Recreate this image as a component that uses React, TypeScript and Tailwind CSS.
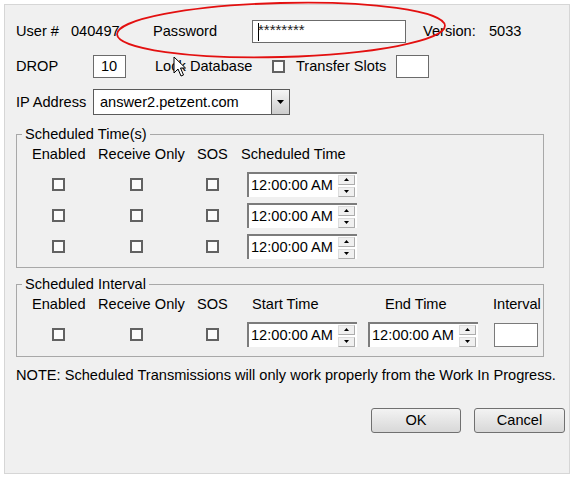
import React from "react";

const font = { fontFamily: '"Liberation Sans", Arial, sans-serif' };

function Check() {
  return <div className="w-[13px] h-[13px] border-2 border-[#626262] bg-[#fcfcfc]" />;
}

function Spinner() {
  return (
    <div className="flex flex-col gap-[2px] mr-[2px]">
      <div className="w-[17px] h-[10px] border border-[#acacac] border-t-[#dcdcdc] border-l-[#dcdcdc] bg-[#f0f0f0] flex items-center justify-center">
        <svg width="5" height="3" viewBox="0 0 5 3">
          <path d="M0 3 L2.5 0 L5 3 Z" fill="#000" />
        </svg>
      </div>
      <div className="w-[17px] h-[10px] border border-[#acacac] border-t-[#dcdcdc] border-l-[#dcdcdc] bg-[#f0f0f0] flex items-center justify-center">
        <svg width="5" height="3" viewBox="0 0 5 3">
          <path d="M0 0 L5 0 L2.5 3 Z" fill="#000" />
        </svg>
      </div>
    </div>
  );
}

function TimeBox() {
  return (
    <div className="w-[110px] h-[25px] bg-white border-t-2 border-l-2 border-[#7c7c7c] flex items-center justify-between">
      <span className="pl-[2px] leading-none">12:00:00 AM</span>
      <Spinner />
    </div>
  );
}

function Cell({ w, children }: { w: string; children?: React.ReactNode }) {
  return <div className={w + " shrink-0 whitespace-nowrap"}>{children}</div>;
}

export default function App() {
  return (
    <div className="relative w-[576px] h-[478px] bg-white pt-[4px] pl-[4px] text-black text-[14.6px] leading-[17px]" style={font}>
      <div className="w-[566px] h-[470px] border border-[#d6d6d6] bg-[#f0f0f0] pl-[11px]">
        {/* row 1 */}
        <div className="flex items-center h-[23px] mt-[15px]">
          <span className="w-[55px]">User #</span>
          <span className="w-[82px]">040497</span>
          <span className="w-[99px]">Password</span>
          <div className="w-[154px] h-[23px] bg-white border border-[#6b6b6b] flex items-center pl-[5px]">
            <div className="w-px h-[18px] bg-black" />
            <span className="text-[15px] leading-none -ml-px mb-[4px] text-[#1e1e1e]">********</span>
          </div>
          <span className="w-[66px] ml-[17px]">Version:</span>
          <span>5033</span>
        </div>

        {/* row 2 */}
        <div className="flex items-center h-[23px] mt-[12px]">
          <span className="w-[77px]">DROP</span>
          <div className="w-[33px] h-[23px] bg-white border border-[#6b6b6b] flex items-center pl-[7px]">10</div>
          <span className="w-[117px] ml-[29px]">Lock Database</span>
          <Check />
          <span className="w-[100px] ml-[11px]">Transfer Slots</span>
          <div className="w-[33px] h-[23px] bg-white border border-[#6b6b6b]" />
        </div>

        {/* row 3 */}
        <div className="flex items-center h-[26px] mt-[11px]">
          <span className="w-[77px]">IP Address</span>
          <div className="w-[197px] h-[26px] bg-white border border-[#5a5a5a] flex">
            <span className="flex-1 pl-[6px] flex items-center">answer2.petzent.com</span>
            <div className="w-[18px] h-full border-l border-[#5a5a5a] bg-gradient-to-b from-[#f6f6f6] to-[#cdcdcd] flex items-center justify-center">
              <svg width="7" height="4" viewBox="0 0 7 4">
                <path d="M0 0 L7 0 L3.5 4 Z" fill="#000" />
              </svg>
            </div>
          </div>
        </div>

        {/* scheduled times */}
        <fieldset className="w-[528px] h-[142px] mt-[11px] border border-[#a8a8a8] px-0">
          <legend className="ml-[5px] px-[3px]">Scheduled Time(s)</legend>
          <div className="flex mt-[3px] pl-[15px]">
            <Cell w="w-[66px]">Enabled</Cell>
            <Cell w="w-[99px]">Receive Only</Cell>
            <Cell w="w-[44px]">SOS</Cell>
            <span>Scheduled Time</span>
          </div>
          <div className="mt-[6px]">
            {[0, 1, 2].map((i) => (
              <div key={i} className="flex items-center h-[31px] pl-[35px]">
                <Cell w="w-[78px]"><Check /></Cell>
                <Cell w="w-[76px]"><Check /></Cell>
                <Cell w="w-[41px]"><Check /></Cell>
                <TimeBox />
              </div>
            ))}
          </div>
        </fieldset>

        {/* scheduled interval */}
        <fieldset className="w-[528px] h-[81px] mt-[8px] border border-[#a8a8a8] px-0">
          <legend className="ml-[5px] px-[3px]">Scheduled Interval</legend>
          <div className="flex mt-[3px] pl-[15px]">
            <Cell w="w-[66px]">Enabled</Cell>
            <Cell w="w-[99px]">Receive Only</Cell>
            <Cell w="w-[55px]">SOS</Cell>
            <Cell w="w-[133px]">Start Time</Cell>
            <Cell w="w-[108px]">End Time</Cell>
            <span>Interval</span>
          </div>
          <div className="flex items-center h-[31px] mt-[6px] pl-[35px]">
            <Cell w="w-[78px]"><Check /></Cell>
            <Cell w="w-[76px]"><Check /></Cell>
            <Cell w="w-[41px]"><Check /></Cell>
            <TimeBox />
            <div className="ml-[11px]"><TimeBox /></div>
            <div className="ml-[16px] w-[44px] h-[24px] bg-white border border-[#7a7a7a]" />
          </div>
        </fieldset>

        <p className="mt-[10px] whitespace-nowrap">NOTE: Scheduled Transmissions will only work properly from the Work In Progress.</p>

        <div className="flex justify-end gap-[13px] pr-[4px] mt-[24px]">
          <button className="w-[90px] h-[25px] rounded-[3px] border border-[#707070] bg-gradient-to-b from-[#f3f3f3] to-[#d8d8d8]">OK</button>
          <button className="w-[91px] h-[25px] rounded-[3px] border border-[#707070] bg-gradient-to-b from-[#f3f3f3] to-[#d8d8d8]">Cancel</button>
        </div>
      </div>

      {/* annotation overlay */}
      <svg className="absolute left-0 top-0 pointer-events-none" width="576" height="478">
        <ellipse cx="281" cy="30" rx="164" ry="27" transform="rotate(-1.5 281 30)" fill="none" stroke="#e31010" strokeWidth="1.8" />
      </svg>
      <svg className="absolute left-[173px] top-[56px] pointer-events-none" width="14" height="22" viewBox="0 0 14 22">
        <path d="M1 1 L1 17 L5 13 L8 20 L10.5 19 L7.5 12 L12.5 12 Z" fill="#fff" stroke="#000" strokeWidth="1" strokeLinejoin="round" />
      </svg>
    </div>
  );
}
